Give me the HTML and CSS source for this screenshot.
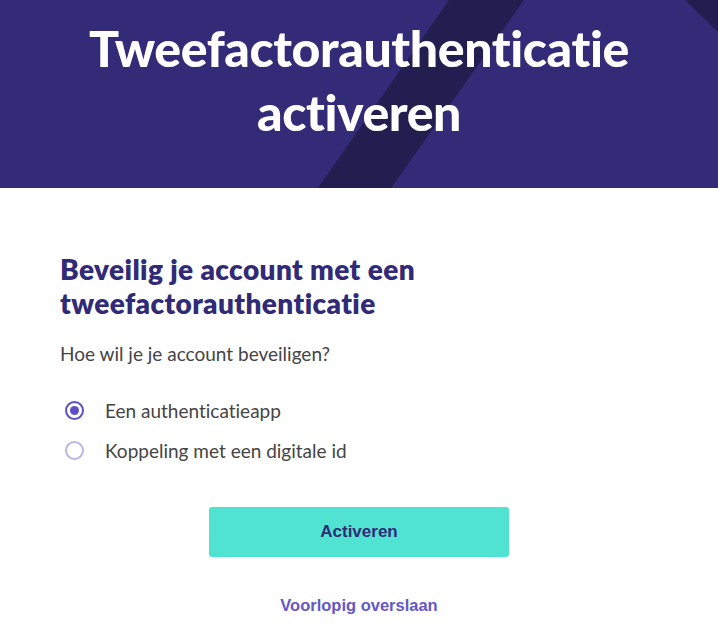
FILE: index.html
```html
<!DOCTYPE html>
<html lang="nl">
<head>
    <meta charset="utf-8" />
    <title>Tweefactorauthenticatie activeren</title>
    <link rel="stylesheet" href="styles.css">
</head>
<body>
<header class="hero">
    <svg class="hero-bg" viewBox="0 0 718 188" preserveAspectRatio="none">
        <polygon points="449,0 524,0 391,188 318,188" fill="#221e4f"/>
        <polygon points="685,0 718,0 718,32" fill="#221e4f"/>
    </svg>
    <h1 class="hero-title">Tweefactorauthenticatie activeren</h1>
</header>

<main class="content">
    <h2 class="sub-title">Beveilig je account met een tweefactorauthenticatie</h2>
    <p class="question">Hoe wil je je account beveiligen?</p>

    <form class="options" action="">
        <label class="option">
            <input type="radio" name="method" value="app" checked>
            <span class="radio"></span>
            <span>Een authenticatieapp</span>
        </label>
        <label class="option">
            <input type="radio" name="method" value="id">
            <span class="radio"></span>
            <span>Koppeling met een digitale id</span>
        </label>

        <div class="actions">
            <button type="button" class="button">Activeren</button>
            <a href="#" class="skip">Voorlopig overslaan</a>
        </div>
    </form>
</main>
</body>
</html>
```

FILE: styles.css
```css
body {margin: 0; background: #fff; font-family: "Source Sans Pro", Lato, "Noto Sans", sans-serif; font-variant-ligatures: none;}

.hero {position: relative; height: 188px; background: #332b77; overflow: hidden; display: flex; justify-content: center;}
.hero-bg {position: absolute; left: 0; top: 0; width: 100%; height: 100%;}
.hero-title {position: relative; margin: 0; padding-top: 16px; width: 580px; text-align: center; color: #fff; font-size: 50px; line-height: 64px; font-weight: 900; letter-spacing: -0.4px;}

.content {width: 598px; margin: 0 auto; padding-top: 64px;}
.sub-title {margin: 0; color: #312a77; font-size: 28px; line-height: 34px; font-weight: 800; letter-spacing: 0.4px; width: 420px;}
.question {margin: 22px 0 0; color: #444; font-size: 19px; line-height: 24px;}

.options {margin-top: 24px;}
.option {display: flex; align-items: center; gap: 21px; height: 40px; color: #444; font-size: 19px; cursor: pointer;}
.option input {display: none;}
.radio {width: 19px; height: 19px; margin-left: 5px; border-radius: 50%; border: 2px solid #bcb6e4; box-sizing: border-box; display: flex; align-items: center; justify-content: center;}
.option input:checked + .radio {border-color: #5d50c6;}
.option input:checked + .radio::after {content: ""; width: 9px; height: 9px; border-radius: 50%; background: #5d50c6;}

.actions {display: flex; flex-direction: column; align-items: center; margin-top: 37px;}
.button {width: 300px; height: 50px; border: none; border-radius: 3px; background: #50e3d2; color: #312a77; font-family: "Liberation Sans", Arial, sans-serif; font-size: 17px; font-weight: 700;}
.skip {margin-top: 39px; color: #6557c6; font-family: "Liberation Sans", Arial, sans-serif; font-size: 16.5px; font-weight: 700; text-decoration: none;}
```
